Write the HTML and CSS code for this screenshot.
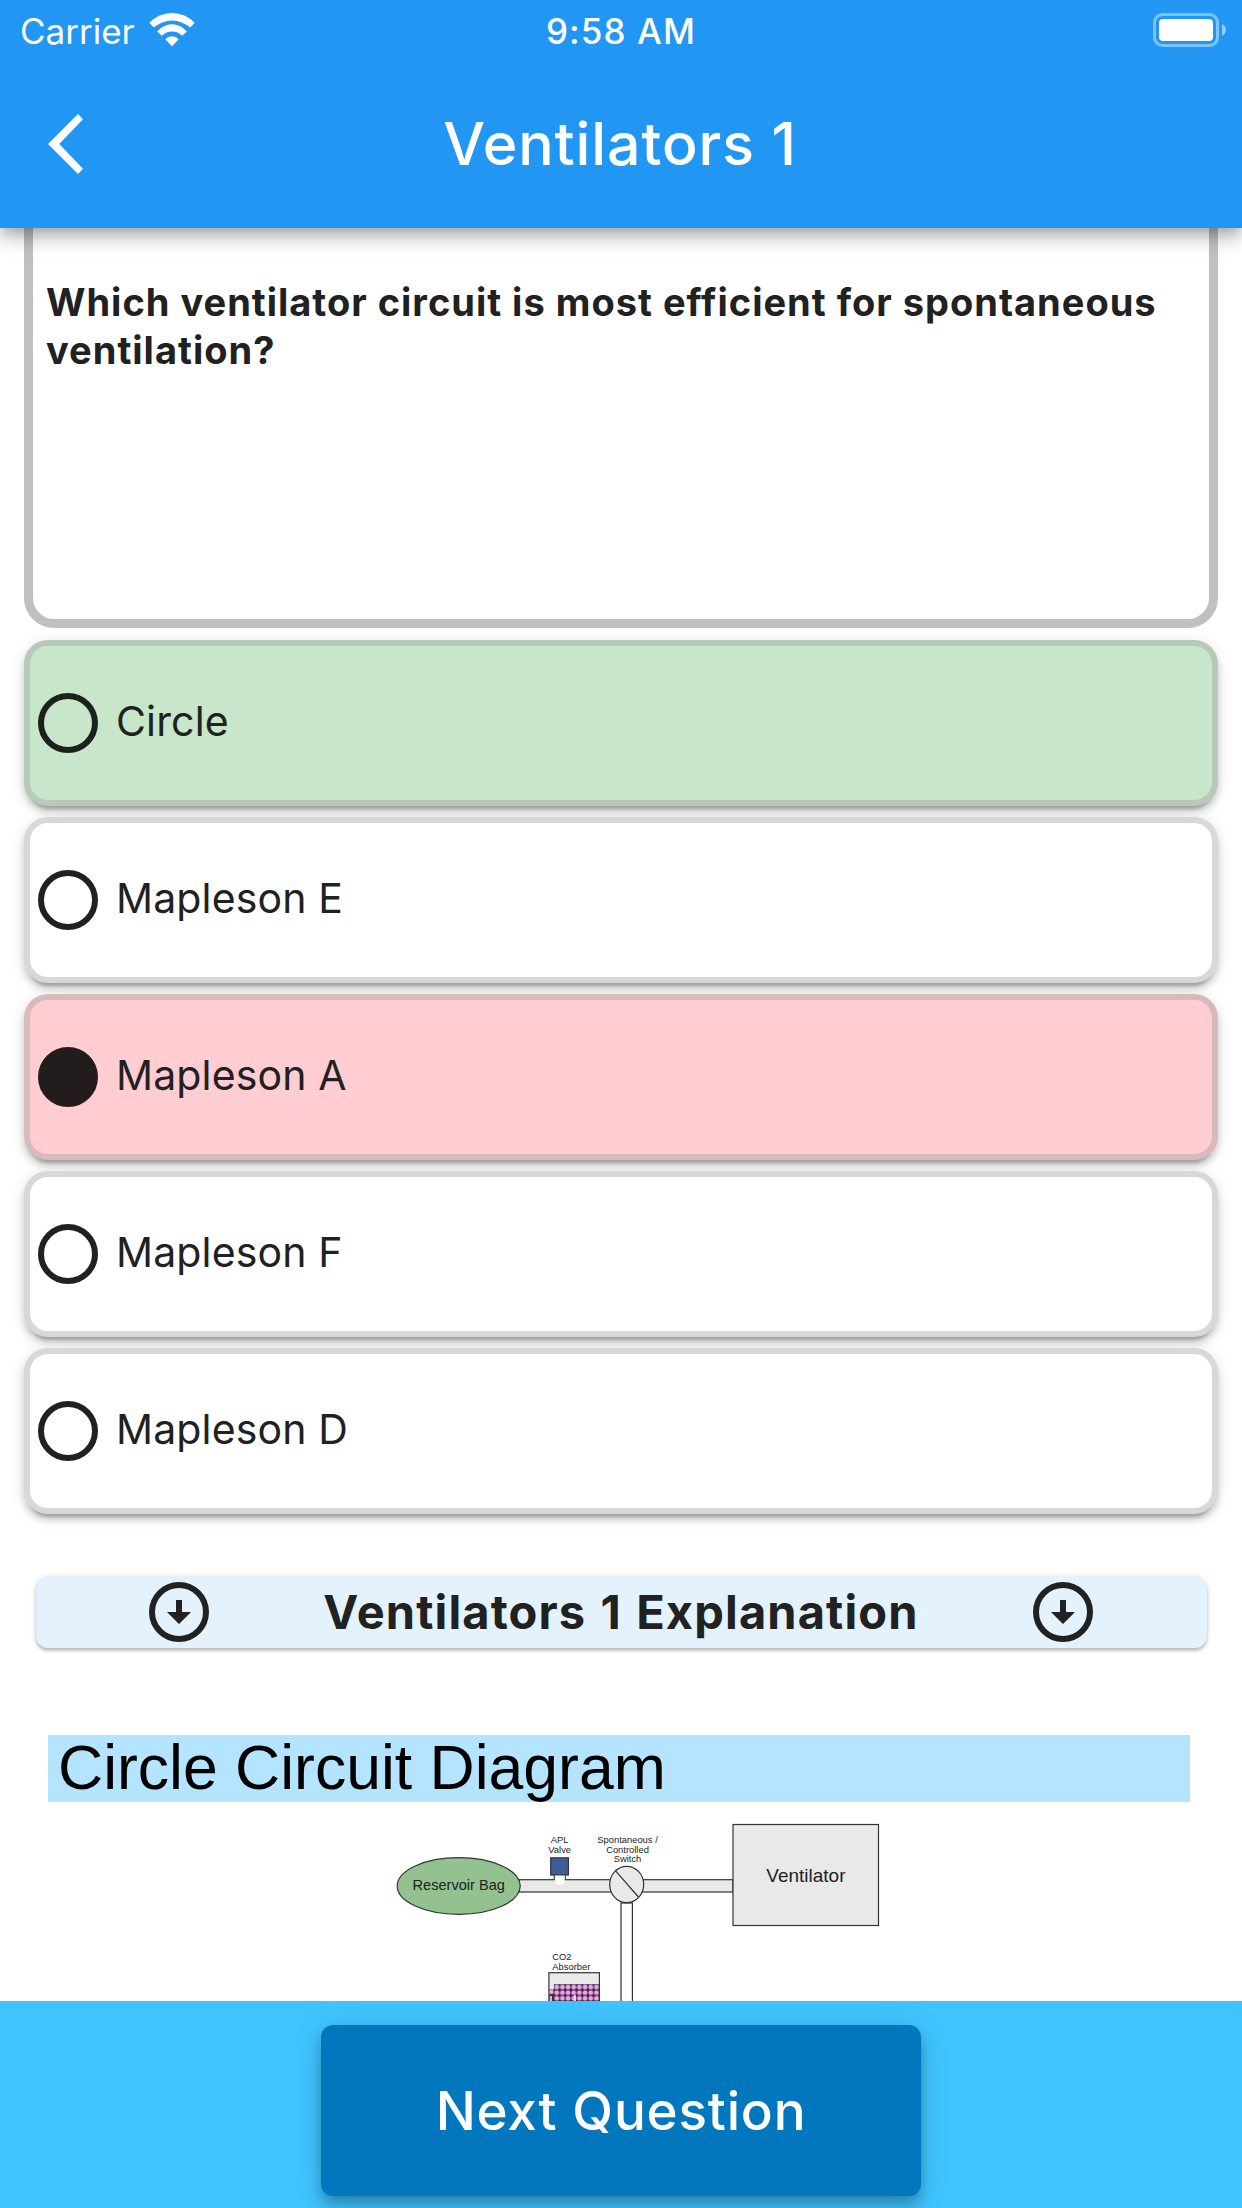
FILE: index.html
```
<!DOCTYPE html>
<html lang="en">
<head>
<meta charset="utf-8">
<title>Ventilators 1</title>
<link rel="stylesheet" href="styles.css">
</head>
<body>
<div class="screen">
  <header class="app-bar">
    <div class="status">
      <div class="carrier">
        <span>Carrier</span>
        <svg class="wifi" viewBox="0 0 46 34" width="46" height="34" fill="#fff">
          <path d="M0.3 10A30.8 30.8 0 0 1 45.7 10L41 14.5A27 27 0 0 0 5 14.5Z"/>
          <path d="M8.2 18.4A19 19 0 0 1 37.8 18.4L33.3 22.8A14.5 14.5 0 0 0 12.7 22.8Z"/>
          <path d="M16.3 26.3A9 9 0 0 1 29.7 26.3L23 33.2Z"/>
        </svg>
      </div>
      <div class="clock">9:58 AM</div>
      <svg class="battery" viewBox="0 0 74 34" width="74" height="34">
        <rect x="1.5" y="1.5" width="63" height="31" rx="8" fill="none" stroke="#fff" stroke-opacity=".42" stroke-width="3"/>
        <rect x="6" y="6" width="54" height="22" rx="4" fill="#fff"/>
        <path d="M69 11C74.300 13.500 74.300 20.500 69 23Z" fill="#fff" fill-opacity=".5"/>
      </svg>
    </div>
    <nav class="nav">
      <svg class="back" viewBox="0 0 35 60" width="35" height="60"><path d="M30 0L35 5.200 11.200 30 35 54.800 30 60 0 30Z" fill="#fff"/></svg>
      <h1 class="title">Ventilators 1</h1>
    </nav>
  </header>

  <main class="content">
    <section class="question">Which ventilator circuit is most efficient for spontaneous ventilation?</section>

    <div class="options">
      <div class="option correct"><span class="radio"></span><span class="label">Circle</span></div>
      <div class="option"><span class="radio"></span><span class="label">Mapleson E</span></div>
      <div class="option wrong"><span class="radio checked"></span><span class="label">Mapleson A</span></div>
      <div class="option"><span class="radio"></span><span class="label">Mapleson F</span></div>
      <div class="option"><span class="radio"></span><span class="label">Mapleson D</span></div>
    </div>

    <div class="explain">
      <svg class="down" viewBox="0 0 24 24" width="72" height="72"><circle cx="12" cy="12" r="9" fill="none" stroke="#212121" stroke-width="2"/><path d="M11 8h2v4h3l-4 4-4-4h3z" fill="#212121"/></svg>
      <h2 class="explain-title">Ventilators 1 Explanation</h2>
      <svg class="down" viewBox="0 0 24 24" width="72" height="72"><circle cx="12" cy="12" r="9" fill="none" stroke="#212121" stroke-width="2"/><path d="M11 8h2v4h3l-4 4-4-4h3z" fill="#212121"/></svg>
    </div>

    <figure class="diagram">
      <figcaption class="caption">Circle Circuit Diagram</figcaption>
      <svg class="circuit" viewBox="48 1802 1142 199" width="1142" height="199">
        <defs>
          <pattern id="beads" x="553.9" y="1984.200" width="5.670" height="5.600" patternUnits="userSpaceOnUse">
            <rect width="5.670" height="5.600" fill="#3a2438"/>
            <circle cx="2.830" cy="2.800" r="2.400" fill="#eda2ec"/>
          </pattern>
        </defs>
        <g fill="#e9e9e9" stroke="#333" stroke-width="1.200">
          <rect x="519" y="1879.700" width="92" height="12.300"/>
          <rect x="642" y="1879.700" width="91" height="12.300"/>
          <rect x="621" y="1903" width="11.400" height="110" fill="#fff"/>
          <ellipse cx="626.700" cy="1884.500" rx="17" ry="18.200"/>
          <path d="M615.400 1870.700L638.400 1897" fill="none"/>
          <rect x="733" y="1824.500" width="145.500" height="101"/>
          <ellipse cx="458.700" cy="1886" rx="61.500" ry="28.300" fill="#93c18f"/>
          <path d="M554.300 1875V1880M565.300 1875V1880" fill="none"/>
          <rect x="550.700" y="1857.800" width="17.700" height="17.200" fill="#3f5c9a"/>
          <rect x="548.900" y="1972.700" width="50.500" height="40"/>
        </g>
        <path d="M554.900 1875.800H564.700V1881A5 5 0 0 1 554.900 1881Z" fill="#fff"/>
        <rect x="553.900" y="1984.200" width="45" height="17" fill="url(#beads)"/>
        <rect x="549.500" y="1989.500" width="4.400" height="12" fill="#3a2438"/>
        <circle cx="551.500" cy="1992" r="2.200" fill="#eda2ec"/>
        <path d="M551 1996V2001M575 1995V2001" stroke="#fff" stroke-width="1.400"/>
        <g class="labels" fill="#222">
          <text x="412.500" y="1889.700" font-size="14.600">Reservoir Bag</text>
          <text x="766.300" y="1882" font-size="19">Ventilator</text>
          <g font-size="9.400">
            <g text-anchor="middle">
              <text x="559.700" y="1842.500">APL</text>
              <text x="559.700" y="1852.500">Valve</text>
              <text x="627.500" y="1842.500">Spontaneous /</text>
              <text x="627.500" y="1852.500">Controlled</text>
              <text x="627.500" y="1862.300">Switch</text>
            </g>
            <text x="552.300" y="1960">CO2</text>
            <text x="552.300" y="1969.500">Absorber</text>
          </g>
        </g>
      </svg>
    </figure>
  </main>

  <footer class="bottom-bar">
    <button class="next" type="button">Next Question</button>
  </footer>
</div>
</body>
</html>
```
FILE: styles.css
```
* { box-sizing: border-box; margin: 0; }

body {
  background: #fff;
  color: #212121;
  font-family: Inter, "Liberation Sans", sans-serif;
}

.screen {
  width: 1242px;
  height: 2208px;
  display: flex;
  flex-direction: column;
  overflow: hidden;
}

.app-bar {
  position: relative;
  z-index: 1;
  flex: none;
  height: 228px;
  background: #2196f3;
  color: #fff;
  box-shadow: 0 6px 12px -3px rgba(0, 0, 0, .2), 0 12px 15px rgba(0, 0, 0, .14), 0 3px 30px rgba(0, 0, 0, .12);
}

.status {
  display: grid;
  grid-template-columns: 1fr auto 1fr;
  align-items: center;
  height: 60px;
  padding: 2px 15px 0;
  font-size: 35px;
  line-height: 58px;
}

.carrier { display: flex; align-items: center; gap: 14px; padding-left: 5px; }
.wifi { margin-bottom: 2px; }
.clock { font-weight: 500; letter-spacing: 1.1px; }
.battery { justify-self: end; margin-bottom: 2px; }

.nav {
  display: grid;
  grid-template-columns: 83px 1fr 85px;
  align-items: center;
  height: 168px;
}

.back { justify-self: end; }

.title {
  padding-bottom: 2px;
  text-align: center;
  font-size: 59px;
  font-weight: 500;
  letter-spacing: .9px;
}

.content {
  flex: 1;
  min-height: 0;
  overflow: hidden;
  display: flex;
  flex-direction: column;
}

.question {
  flex: none;
  height: 400px;
  margin: 0 24px;
  padding: 50px 13px 0;
  border: 9px solid #c0c0c0;
  border-top: 0;
  border-radius: 0 0 30px 30px;
  font-size: 38px;
  font-weight: 700;
  line-height: 48px;
  letter-spacing: 1px;
}

.options {
  display: flex;
  flex-direction: column;
  gap: 11px;
  margin: 12px 24px 0;
}

.option {
  display: flex;
  align-items: center;
  gap: 18.500px;
  height: 166px;
  padding: 0 0 1px 7.500px;
  border: 6px solid rgba(158, 158, 158, .4);
  border-radius: 24px;
  background: #fff;
  box-shadow: 0 9px 3px -6px rgba(0, 0, 0, .2), 0 6px 6px rgba(0, 0, 0, .14), 0 3px 15px rgba(0, 0, 0, .12);
}

.correct { background: #c8e6c9; }
.wrong { background: #ffcdd2; }

.radio {
  width: 60px;
  height: 60px;
  border: 6px solid #212121;
  border-radius: 50%;
}

.correct .radio { border-color: #1d211d; }
.checked { background: #221c1c; border-color: #221c1c; }

.label {
  padding-bottom: 4px;
  font-size: 41px;
  letter-spacing: .15px;
}

.explain {
  display: flex;
  justify-content: space-evenly;
  align-items: center;
  flex: none;
  height: 72px;
  margin: 62px 35.500px 0;
  border-radius: 12px;
  background: #e3f2fd;
  box-shadow: 0 3px 3px rgba(0, 0, 0, .2), 0 1px 6px rgba(0, 0, 0, .12);
}

.explain-title {
  padding-bottom: 2px;
  font-size: 47px;
  font-weight: 700;
  letter-spacing: 1.130px;
  word-spacing: 2px;
}

.diagram {
  flex: none;
  width: 1142px;
  margin: 87px 0 0 48px;
}

.caption {
  height: 67px;
  padding-left: 10px;
  background: #b4e4ff;
  color: #000;
  font: 62.500px/65px "Liberation Sans", Arial, sans-serif;
}

.circuit { display: block; }
.labels { font-family: "Liberation Sans", Arial, sans-serif; }

.bottom-bar {
  flex: none;
  display: flex;
  justify-content: center;
  height: 207px;
  padding-top: 24px;
  background: #40c4ff;
}

.next {
  width: 600px;
  height: 171px;
  border: 0;
  border-radius: 12px;
  background: #0277bd;
  color: #fff;
  font: 500 53px Inter, "Liberation Sans", sans-serif;
  letter-spacing: .8px;
  box-shadow: 0 6px 12px -3px rgba(0, 0, 0, .2), 0 12px 15px rgba(0, 0, 0, .14), 0 3px 30px rgba(0, 0, 0, .12);
}
```
